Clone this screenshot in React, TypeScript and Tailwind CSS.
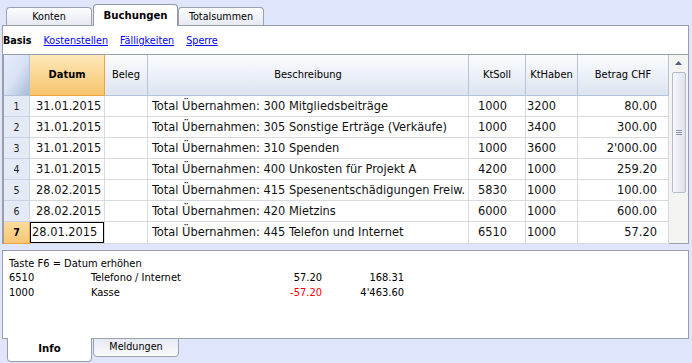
const rows = [
  { n: 1, date: "31.01.2015", text: "Total Übernahmen: 300 Mitgliedsbeiträge", soll: "1000", haben: "3200", amount: "80.00" },
  { n: 2, date: "31.01.2015", text: "Total Übernahmen: 305 Sonstige Erträge (Verkäufe)", soll: "1000", haben: "3400", amount: "300.00" },
  { n: 3, date: "31.01.2015", text: "Total Übernahmen: 310 Spenden", soll: "1000", haben: "3600", amount: "2'000.00" },
  { n: 4, date: "31.01.2015", text: "Total Übernahmen: 400 Unkosten für Projekt A", soll: "4200", haben: "1000", amount: "259.20" },
  { n: 5, date: "28.02.2015", text: "Total Übernahmen: 415 Spesenentschädigungen Freiw.", soll: "5830", haben: "1000", amount: "100.00" },
  { n: 6, date: "28.02.2015", text: "Total Übernahmen: 420 Mietzins", soll: "6000", haben: "1000", amount: "600.00" },
  { n: 7, date: "28.01.2015", text: "Total Übernahmen: 445 Telefon und Internet", soll: "6510", haben: "1000", amount: "57.20" },
]

const cols = "grid grid-cols-[26px_75px_43px_321px_57px_52px_91px]"

function TopTab({ label, active, className }: { label: string; active?: boolean; className?: string }) {
  if (active) {
    return (
      <div
        className={`relative z-10 -mb-px flex h-[22px] w-[85px] items-center justify-center rounded-t-[4px] border border-b-0 border-[#8f98a8] bg-white pt-[1px] text-[11.3px] font-bold text-black ${className ?? ""}`}
      >
        {label}
      </div>
    )
  }
  return (
    <div
      className={`flex h-[18px] w-[86px] items-center justify-center rounded-t-[4px] border border-b-0 border-[#9aa2b2] bg-gradient-to-b from-[#fdfdfe] to-[#e6e9f2] pt-[1px] text-[10.7px] text-black ${className ?? ""}`}
    >
      {label}
    </div>
  )
}

export default function App() {
  return (
    <div
      className="h-[363px] w-[692px] overflow-hidden bg-[#dfe6fc] text-black"
      style={{ fontFamily: '"DejaVu Sans Condensed", "Liberation Sans", sans-serif' }}
    >
      {/* top tabs */}
      <div className="flex h-[25px] items-end pl-[6px]">
        <TopTab label="Konten" />
        <TopTab label="Buchungen" active className="ml-[1px]" />
        <TopTab label="Totalsummen" />
      </div>

      {/* main panel */}
      <div className="ml-[2px] flex h-[219px] w-[687px] flex-col border border-[#9a9eaa] bg-white">
        <div className="flex h-[28px] items-center gap-[12px] pt-[3px] text-[10.7px]">
          <span className="font-bold">Basis</span>
          <span className="text-[#0000ff] underline">Kostenstellen</span>
          <span className="text-[#0000ff] underline">Fälligkeiten</span>
          <span className="text-[#0000ff] underline">Sperre</span>
        </div>

        <div className="flex border-t border-[#9a9eaa]">
          <div className="w-[666px] border-l border-[#9a9eaa]">
            {/* header */}
            <div className={`${cols} h-[41px] text-[11px]`}>
              <div className="border-r border-b border-[#b4c4dc] bg-gradient-to-br from-[#e6edfa] via-[#d9e3f5] to-[#a9bbda]" />
              <div className="flex items-center justify-center border-r border-b border-[#f0a43c] bg-gradient-to-b from-[#fde8b8] to-[#f7c56c] font-bold">
                Datum
              </div>
              {["Beleg", "Beschreibung", "KtSoll", "KtHaben", "Betrag CHF"].map((h) => (
                <div
                  key={h}
                  className="flex items-center justify-center border-r border-b border-[#b4c4dc] bg-gradient-to-b from-[#fbfcfe] to-[#dde4f0]"
                >
                  {h}
                </div>
              ))}
            </div>

            {/* body */}
            {rows.map((r) => {
              const current = r.n === 7
              return (
                <div key={r.n} className={`${cols} h-[21px] text-[12.7px] leading-none text-[#111]`}>
                  <div
                    className={`flex items-center justify-center border-r border-b text-[10.5px] ${
                      current
                        ? "border-[#f0a43c] bg-gradient-to-b from-[#fbdc9c] to-[#f6c674] font-bold text-black"
                        : "border-[#c8d4e6] bg-[#e4ebf6] text-[#222]"
                    }`}
                  >
                    {r.n}
                  </div>
                  <div className="flex items-center border-r border-b border-[#d6d9de] pl-[6px]">
                    {current ? (
                      <div className="-ml-[6px] flex h-[21px] w-[74px] items-center border border-black pl-[1px]">
                        {r.date}
                      </div>
                    ) : (
                      r.date
                    )}
                  </div>
                  <div className="border-r border-b border-[#d6d9de]" />
                  <div className="flex items-center overflow-hidden whitespace-nowrap border-r border-b border-[#d6d9de] pl-[4px]">
                    {r.text}
                  </div>
                  <div className="flex items-center border-r border-b border-[#d6d9de] pl-[9px]">{r.soll}</div>
                  <div className="flex items-center border-r border-b border-[#d6d9de] pl-[1px]">{r.haben}</div>
                  <div className="flex items-center justify-end border-r border-b border-[#d6d9de] pr-[11px]">
                    {r.amount}
                  </div>
                </div>
              )
            })}
          </div>

          {/* scrollbar */}
          <div className="flex flex-1 flex-col items-center bg-[#f4f4f2]">
            <div className="flex h-[16px] w-full items-center justify-center">
              <svg width="7" height="4" viewBox="0 0 7 4">
                <path d="M3.5 0 L7 4 L0 4 Z" fill="#4d6185" />
              </svg>
            </div>
            <div className="mt-[1px] flex h-[121px] w-[14px] items-center justify-center rounded-[2px] border border-[#b4bccb] bg-gradient-to-r from-[#f7f8fb] to-[#dde2ec]">
              <div className="flex flex-col gap-[1px]">
                <div className="h-px w-[6px] bg-[#8c94a4]" />
                <div className="h-px w-[6px] bg-[#8c94a4]" />
                <div className="h-px w-[6px] bg-[#8c94a4]" />
              </div>
            </div>
          </div>
        </div>
      </div>

      {/* info panel */}
      <div className="ml-[2px] mt-[6px] h-[89px] w-[687px] border border-[#9a9eaa] bg-white pl-[6px] pt-[6px] text-[11px]">
        <div className="leading-[13px]">Taste F6 = Datum erhöhen</div>
        <div className="flex leading-[15px]">
          <span className="w-[82px]">6510</span>
          <span className="w-[150px]">Telefono / Internet</span>
          <span className="w-[81px] text-right">57.20</span>
          <span className="w-[82px] text-right">168.31</span>
        </div>
        <div className="flex leading-[15px]">
          <span className="w-[82px]">1000</span>
          <span className="w-[150px]">Kasse</span>
          <span className="w-[81px] text-right text-[#ff0000]">-57.20</span>
          <span className="w-[82px] text-right">4'463.60</span>
        </div>
      </div>

      {/* bottom tabs */}
      <div className="flex pl-[7px]">
        <div className="relative z-10 -mt-px flex h-[24px] w-[85px] items-center justify-center rounded-b-[4px] border border-t-0 border-[#9a9eaa] bg-white pb-[1px] text-[11.3px] font-bold">
          Info
        </div>
        <div className="-mt-px ml-[1px] flex h-[19px] w-[86px] items-center justify-center rounded-b-[4px] border border-[#9aa2b2] bg-gradient-to-b from-[#e6e9f2] to-[#fbfbfd] text-[10.7px]">
          Meldungen
        </div>
      </div>
    </div>
  )
}
